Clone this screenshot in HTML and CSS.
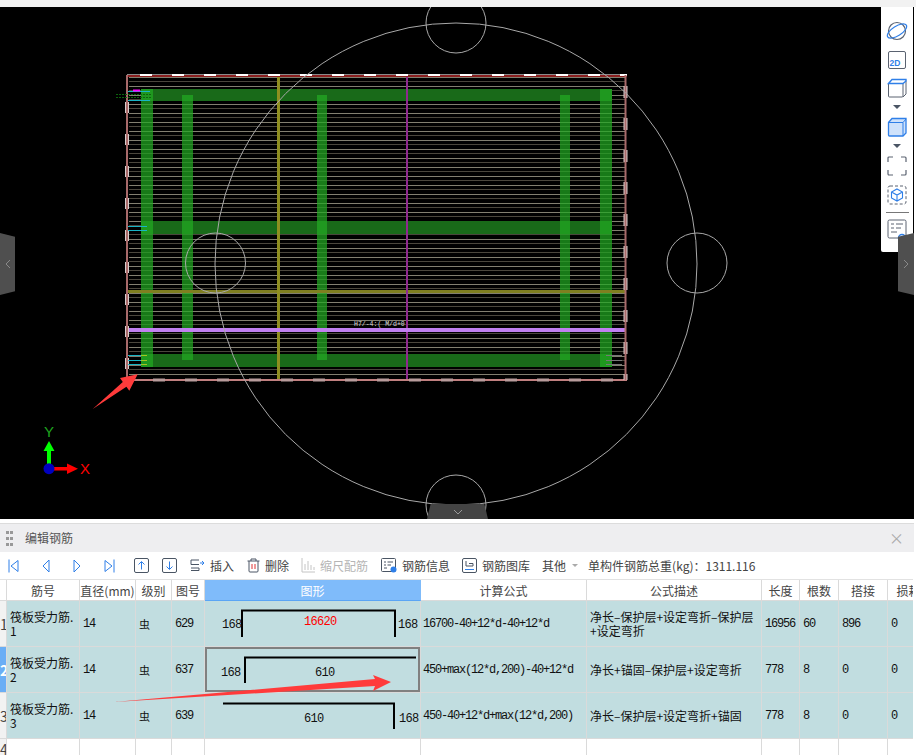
FILE: index.html
```html
<!DOCTYPE html>
<html lang="zh-CN">
<head>
  <meta charset="UTF-8">
  <title>编辑钢筋</title>
  <link rel="stylesheet" href="styles.css">
</head>
<body>

  <div class="top-strip"></div>

  <!-- 三维视图 -->
  <div class="viewport">
    <svg class="cad" width="914" height="512" viewBox="0 7 914 512">
      <defs>
        <pattern id="rebarLines" width="10" height="9" y="5" patternUnits="userSpaceOnUse">
          <rect width="10" height="1" fill="#827f70"/>
          <rect y="4" width="10" height="1" fill="#4a463c"/>
        </pattern>
      </defs>

      <rect x="129" y="77" width="496" height="301" fill="url(#rebarLines)"/>

      <!-- 横向绿筋 -->
      <g fill="#196a19">
        <rect x="141" y="89" width="471" height="12"/>
        <rect x="141" y="221" width="471" height="13"/>
        <rect x="141" y="354" width="471" height="13"/>
      </g>
      <!-- 纵向绿筋 -->
      <g fill="#22aa22" opacity="0.72">
        <rect x="141" y="89" width="12" height="278"/>
        <rect x="182" y="95" width="11" height="265"/>
        <rect x="317" y="95" width="10" height="265"/>
        <rect x="560" y="95" width="10" height="265"/>
        <rect x="600" y="89" width="12" height="278"/>
      </g>

      <rect x="127" y="290" width="499" height="3" fill="#7f7f20"/>
      <rect x="277" y="75" width="3" height="305" fill="#8f8f20"/>
      <rect x="406" y="75" width="2" height="305" fill="#8f2a8f"/>
      <rect x="127" y="328" width="499" height="4" fill="#c080f0"/>

      <!-- 外框 -->
      <g fill="none" stroke-width="2">
        <path d="M127 74.500H627" stroke="#8a8a8a" stroke-width="1"/>
        <path d="M127 76H627" stroke="#8b1f1f"/>
        <path d="M127 380H627" stroke="#c08080"/>
        <path d="M140 75H627" stroke="#fff" stroke-dasharray="12 20"/>
        <path d="M153 380H627" stroke="#b89c9c" stroke-width="3" stroke-dasharray="12 20"/>
        <path d="M127 102V380" stroke="#d8cccc" stroke-width="4" stroke-dasharray="11 21"/>
        <path d="M625.500 86V380" stroke="#d8cccc" stroke-width="4" stroke-dasharray="12 20"/>
        <path d="M127 75V380" stroke="#a86a6a"/>
        <path d="M625.500 75V380" stroke="#a86a6a"/>
      </g>

      <!-- 端部标注 -->
      <g stroke-width="1" fill="none">
        <path d="M128 91.500H150M128 100.500H150" stroke="#17b5c5"/>
        <path d="M133 90.500H140" stroke="#ff00ff" stroke-width="2"/>
        <path d="M116 94.500H151M116 97.500H151" stroke="#0c640c" stroke-dasharray="2 1"/>
        <path d="M128 226.500H147M128 230.500H147" stroke="#17b5c5"/>
        <path d="M128 355.500H147M128 360.500H147M128 364.500H147" stroke="#17b5c5"/>
        <path d="M141 355.500H147M141 360.500H147M141 364.500H147" stroke="#a5c520"/>
        <path d="M606 355.500H622M606 360.500H622M606 364.500H622" stroke="#777"/>
      </g>
      <text class="cad-note" x="354" y="326">H7/-4:( M/d+0</text>

      <!-- 圆 -->
      <g fill="none" stroke="#a8a8a8">
        <circle cx="456" cy="264" r="241"/>
        <circle cx="456" cy="23" r="30"/>
        <circle cx="456" cy="505" r="30"/>
        <circle cx="697" cy="263" r="30"/>
        <circle cx="215.500" cy="263" r="30"/>
      </g>

      <!-- 坐标轴 -->
      <path d="M49 441L54.500 451H51V464H47V451H43.500Z" fill="#00ff00"/>
      <path d="M53 467H67V463.500L78 468.700L67 474V470.500H53Z" fill="#ff0000"/>
      <circle cx="49" cy="468.700" r="5.500" fill="#0000c0"/>
      <text class="axis axis-y" x="49" y="437">Y</text>
      <text class="axis axis-x" x="85" y="474">X</text>
    </svg>

    <div class="tool-rail">
      <svg width="20" height="20" viewBox="0 0 20 20" fill="none">
        <circle cx="10" cy="10" r="8.500" stroke="#5a6270" stroke-width="1.200"/>
        <ellipse cx="10" cy="10" rx="11" ry="4.800" transform="rotate(-32 10 10)" stroke="#2f7fe8" stroke-width="1.200"/>
      </svg>
      <svg width="20" height="20" viewBox="0 0 20 20" fill="none">
        <rect x="1.500" y="1.500" width="17" height="17" rx="1.500" stroke="#5a6270"/>
        <text class="icon-2d" x="2.500" y="16">2D</text>
      </svg>
      <svg class="first-cube" width="20" height="20" viewBox="0 0 20 20" fill="none">
        <path d="M1.500 5.500V18a1 1 0 0 0 1 1H15a1 1 0 0 0 1-1V5.500H2.500a1 1 0 0 0-1 0Z" stroke="#5a6270"/>
        <path d="M16 19L19 16V2.500" stroke="#5a6270"/>
        <path d="M1.500 5.500L5 1.500H19V3L16 5.500H1.500Z" stroke="#2f7fe8" stroke-width="1.400"/>
      </svg>
      <i class="caret"></i>
      <svg width="20" height="20" viewBox="0 0 20 20" fill="none">
        <path d="M1.500 5.500L5 1.500H19V16L16 19H2.500a1 1 0 0 1-1-1Z" fill="#cfe2fb" stroke="#2f7fe8" stroke-width="1.300"/>
        <path d="M1.500 5.500H16V19M16 5.500L19 2" stroke="#2f7fe8"/>
      </svg>
      <i class="caret"></i>
      <svg width="20" height="20" viewBox="0 0 20 20" fill="none" stroke="#5a6270" stroke-width="1.200">
        <path d="M1 6V2a1 1 0 0 1 1-1H6M14 1H18a1 1 0 0 1 1 1V6M19 14V18a1 1 0 0 1-1 1H14M6 19H2a1 1 0 0 1-1-1V14"/>
      </svg>
      <svg width="20" height="20" viewBox="0 0 20 20" fill="none">
        <rect x="1" y="1" width="18" height="18" rx="2" stroke="#5a6270" stroke-dasharray="3 2"/>
        <path d="M10 4L15.500 7V13L10 16L4.500 13V7ZM4.500 7L10 10L15.500 7M10 10V16" stroke="#2f7fe8" stroke-width="1.100"/>
      </svg>
      <hr class="rail-sep">
      <svg width="20" height="20" viewBox="0 0 20 20" fill="none">
        <rect x="1" y="1" width="18" height="18" rx="1.500" stroke="#5a6270"/>
        <path d="M4 5H7M9 5H16M4 9H7M9 9H14M4 13H10" stroke="#5a6270"/>
        <circle cx="15" cy="19" r="3.500" stroke="#2f7fe8" stroke-width="1.500"/>
      </svg>
    </div>

    <div class="handle handle-left"><svg width="6" height="10" viewBox="0 0 6 10" fill="none"><path d="M5 1L1 5L5 9" stroke="#8a8a8a"/></svg></div>
    <div class="handle handle-right"><svg width="6" height="10" viewBox="0 0 6 10" fill="none"><path d="M1 1L5 5L1 9" stroke="#8a8a8a"/></svg></div>
    <div class="handle-bottom"><svg width="10" height="6" viewBox="0 0 10 6" fill="none"><path d="M1 1L5 5L9 1" stroke="#9a9a9a"/></svg></div>
  </div>

  <!-- 编辑钢筋 -->
  <div class="panel">
    <div class="panel-title">
      <span class="grip"><i></i><i></i><i></i><i></i><i></i><i></i></span>
      <span class="panel-name">编辑钢筋</span>
      <span class="panel-close">×</span>
    </div>

    <div class="toolbar">
      <svg class="nav nav-first" width="11" height="14" viewBox="0 0 11 14" fill="none" stroke="#2f7fe8"><path d="M1 .5V13.500M10 1.500V12.500L3 7Z"/></svg>
      <svg class="nav nav-prev" width="8" height="14" viewBox="0 0 8 14" fill="none" stroke="#2f7fe8"><path d="M7 1V13L1 7Z"/></svg>
      <svg class="nav nav-next" width="8" height="14" viewBox="0 0 8 14" fill="none" stroke="#2f7fe8"><path d="M1 1V13L7 7Z"/></svg>
      <svg class="nav nav-last" width="11" height="14" viewBox="0 0 11 14" fill="none" stroke="#2f7fe8"><path d="M10 .5V13.500M1 1.500V12.500L8 7Z"/></svg>
      <svg class="btn-up" width="15" height="15" viewBox="0 0 15 15" fill="none"><rect x=".5" y=".5" width="14" height="14" rx="1.500" stroke="#4a5564"/><path d="M7.500 11.500V4M4.500 6.500L7.500 3.500L10.500 6.500" stroke="#2f7fe8"/></svg>
      <svg class="btn-down" width="15" height="15" viewBox="0 0 15 15" fill="none"><rect x=".5" y=".5" width="14" height="14" rx="1.500" stroke="#4a5564"/><path d="M7.500 3.500V11M4.500 8.500L7.500 11.500L10.500 8.500" stroke="#2f7fe8"/></svg>

      <svg class="tb-icon i-insert" width="15" height="13" viewBox="0 0 15 13" fill="none"><path d="M9 1H1V5.500H9M1 9H9V11.500H1" stroke="#4a5564"/><path d="M10 4H14M12 2L14 4L12 6" stroke="#2f7fe8"/></svg>
      <span class="tb-text">插入</span>
      <svg class="tb-icon i-del" width="13" height="15" viewBox="0 0 13 15" fill="none"><path d="M.5 3H12.500M4 3V1H9V3M2 3V13a1 1 0 0 0 1 1H10a1 1 0 0 0 1-1V3" stroke="#4a5564"/><path d="M5 6V11M8 6V11" stroke="#e03030"/></svg>
      <span class="tb-text">删除</span>
      <svg class="tb-icon i-scale" width="14" height="15" viewBox="0 0 14 15" fill="none" stroke="#c4c4c4"><path d="M1 0V14H14M4 6V12M7 3V12M10 7V12M13 9V12"/></svg>
      <span class="tb-text tb-off">缩尺配筋</span>
      <svg class="tb-icon i-info" width="16" height="15" viewBox="0 0 16 15" fill="none"><rect x=".5" y=".5" width="14" height="13" rx="1" stroke="#4a5564"/><path d="M3 4H5M6.500 4H12M3 7H5M6.500 7H10M3 10H6" stroke="#4a5564"/><circle cx="12.500" cy="11.500" r="3" fill="#2f7fe8"/></svg>
      <span class="tb-text">钢筋信息</span>
      <svg class="tb-icon i-lib" width="15" height="15" viewBox="0 0 15 15" fill="none"><rect x=".5" y=".5" width="14" height="14" rx="1.500" stroke="#4a5564"/><path d="M4 3V8H11V5.500H7" stroke="#4a5564"/><path d="M3 11.500H12" stroke="#2f7fe8"/></svg>
      <span class="tb-text">钢筋图库</span>
      <span class="tb-text tb-other">其他</span>
      <i class="tb-caret"></i>
      <span class="tb-text tb-total">单构件钢筋总重(kg)：1311.116</span>
    </div>

    <div class="grid-wrap">
      <table class="grid">
        <colgroup>
          <col class="c-idx"><col class="c-no"><col class="c-dia"><col class="c-grade"><col class="c-fig">
          <col class="c-shape"><col class="c-calc"><col class="c-desc"><col class="c-len">
          <col class="c-count"><col class="c-lap"><col class="c-loss">
        </colgroup>
        <tr class="head">
          <th></th>
          <th>筋号</th>
          <th>直径(mm)</th>
          <th>级别</th>
          <th>图号</th>
          <th class="th-on">图形</th>
          <th>计算公式</th>
          <th>公式描述</th>
          <th>长度</th>
          <th>根数</th>
          <th>搭接</th>
          <th>损耗</th>
        </tr>
        <tr class="row">
          <td class="idx">1</td>
          <td>筏板受力筋.<br>1</td>
          <td class="num">14</td>
          <td class="grade">虫</td>
          <td class="num">629</td>
          <td class="shape">
            <svg width="215" height="45" viewBox="205 601 215 45">
              <path d="M242 637V610.500H395V637" fill="none" stroke="#000" stroke-width="2"/>
              <text x="222" y="628">168</text>
              <text class="len-red" x="304" y="625">16620</text>
              <text x="398" y="628">168</text>
            </svg>
          </td>
          <td class="num calc">16700-40+12*d-40+12*d</td>
          <td class="desc">净长–保护层+设定弯折–保护层<br>+设定弯折</td>
          <td class="num">16956</td>
          <td class="num">60</td>
          <td class="num">896</td>
          <td class="num">0</td>
        </tr>
        <tr class="row">
          <td class="idx idx-on">2</td>
          <td>筏板受力筋.<br>2</td>
          <td class="num">14</td>
          <td class="grade">虫</td>
          <td class="num">637</td>
          <td class="shape shape-on">
            <svg width="215" height="45" viewBox="205 647 215 45">
              <path d="M245 683V657.500H416" fill="none" stroke="#000" stroke-width="2"/>
              <text x="221" y="676">168</text>
              <text x="315" y="676">610</text>
            </svg>
          </td>
          <td class="num calc">450+max(12*d,200)-40+12*d</td>
          <td class="desc">净长+锚固–保护层+设定弯折</td>
          <td class="num">778</td>
          <td class="num">8</td>
          <td class="num">0</td>
          <td class="num">0</td>
        </tr>
        <tr class="row">
          <td class="idx">3</td>
          <td>筏板受力筋.<br>3</td>
          <td class="num">14</td>
          <td class="grade">虫</td>
          <td class="num">639</td>
          <td class="shape">
            <svg width="215" height="45" viewBox="205 693 215 45">
              <path d="M223 703.500H394V729" fill="none" stroke="#000" stroke-width="2"/>
              <text x="304" y="722">610</text>
              <text x="399" y="722">168</text>
            </svg>
          </td>
          <td class="num calc">450-40+12*d+max(12*d,200)</td>
          <td class="desc">净长–保护层+设定弯折+锚固</td>
          <td class="num">778</td>
          <td class="num">8</td>
          <td class="num">0</td>
          <td class="num">0</td>
        </tr>
        <tr class="row-empty">
          <td class="idx">4</td>
          <td></td><td></td><td></td><td></td><td></td><td></td><td></td><td></td><td></td><td></td><td></td>
        </tr>
      </table>
    </div>
  </div>

  <!-- 红色标注箭头 -->
  <svg class="marks" width="916" height="755" viewBox="0 0 916 755">
    <polygon points="92.700,409 122.800,381.900 120,378 137.700,374.300 129.300,390.700 126.400,386.700" fill="#ff3b3b"/>
    <polygon points="114,702 375,679 373,675 391,682 373,691 375,686" fill="#ff3b3b"/>
  </svg>

</body>
</html>
```

FILE: styles.css
```css
* { box-sizing: border-box; }
html, body { height: 755px; overflow: hidden; }
body {
  margin: 0;
  position: relative;
  background-color: #fff;
  font-family: "Noto Sans CJK SC", "Noto Sans", sans-serif;
  font-size: 12px;
  color: #111;
}

.top-strip { height: 7px; background-color: #f2f2f2; }

.viewport {
  position: relative;
  width: 914px;
  height: 512px;
  background-color: #000;
  overflow: hidden;
}
.cad { display: block; }
.cad-note { font-family: "Liberation Mono", monospace; font-size: 6.500px; fill: #ddd; }
.axis { font-family: "Liberation Sans", sans-serif; font-size: 15px; text-anchor: middle; }
.axis-y { fill: #1fa51f; }
.axis-x { fill: #ff0000; }

/* 右侧工具条 */
.tool-rail {
  position: absolute;
  top: 0;
  left: 881px;
  width: 32px;
  height: 245px;
  padding-top: 14px;
  background-color: #fff;
  border-radius: 0 0 2px 2px;
  display: flex;
  flex-direction: column;
  align-items: center;
  gap: 9px;
}
.tool-rail svg { flex: none; overflow: visible; }
.first-cube { margin-top: -1px; }
.caret {
  flex: none;
  width: 0;
  height: 0;
  margin: -2px 0 -1px;
  border-left: 4px solid transparent;
  border-right: 4px solid transparent;
  border-top: 4px solid #4a5564;
}
.icon-2d { font-family: "Liberation Sans", sans-serif; font-size: 8.500px; font-weight: bold; fill: #2f7fe8; }
.rail-sep { width: 23px; height: 1px; margin: -2px 0 -3px; border: 0; background-color: #777; flex: none; }

/* 折叠把手 */
.handle {
  position: absolute;
  top: 226px;
  width: 16px;
  height: 62px;
  background-color: #4f4f4f;
  display: flex;
  align-items: center;
  justify-content: center;
}
.handle-left { left: 0; width: 15px; clip-path: polygon(0 0, 100% 6%, 100% 94%, 0 100%); }
.handle-right { right: 0; clip-path: polygon(0 6%, 100% 0, 100% 100%, 0 94%); border-radius: 3px 0 0 3px; }
.handle-bottom {
  position: absolute;
  left: 427px;
  bottom: 0;
  width: 61px;
  height: 15px;
  background-color: #444;
  clip-path: polygon(6% 0, 94% 0, 100% 100%, 0 100%);
  display: flex;
  align-items: center;
  justify-content: center;
}

/* 面板 */
.panel {
  width: 914px;
  margin-top: 4px;
  border-top: 1px solid #dcdcdc;
}
.panel-title {
  height: 28px;
  background-color: #eeeef0;
  display: flex;
  align-items: center;
  padding: 0 0 2px 6px;
  color: #555;
}
.grip { display: grid; grid-template-columns: 3px 3px; gap: 3px 1px; width: 7px; margin-top: 2px; }
.grip i { display: block; width: 3px; height: 3px; background-color: #999; }
.panel-name { margin-left: 12px; }
.panel-close { margin-left: auto; margin-right: 10px; font-size: 15px; color: #aaa; }

.toolbar {
  height: 27px;
  display: flex;
  align-items: center;
  padding-left: 8px;
  color: #444;
}
.toolbar svg { flex: none; }
.nav-prev { margin-left: 23px; }
.nav-next { margin-left: 23px; }
.nav-last { margin-left: 23px; }
.btn-up { margin-left: 19px; }
.btn-down { margin-left: 13px; }
.i-insert { margin-left: 13px; }
.i-del { margin-left: 13px; }
.i-scale { margin-left: 12px; }
.i-info { margin-left: 13px; }
.i-lib { margin-left: 12px; }
.tb-text { margin-left: 5px; white-space: nowrap; }
.tb-off { color: #b5b5b5; }
.tb-other { margin-left: 12px; }
.tb-caret {
  width: 0;
  height: 0;
  margin-left: 6px;
  border-left: 3px solid transparent;
  border-right: 3px solid transparent;
  border-top: 3px solid #aaa;
}
.tb-total { margin-left: 10px; }

/* 表格 */
.grid-wrap { overflow: hidden; width: 913px; border-top: 1px solid #e2e2e2; }
.grid {
  table-layout: fixed;
  width: 930px;
  border-collapse: separate;
  border-spacing: 0;
}
.c-idx { width: 7px; }
.c-no { width: 73px; }
.c-dia { width: 56px; }
.c-grade { width: 36px; }
.c-fig { width: 33px; }
.c-shape { width: 216px; }
.c-calc { width: 166px; }
.c-desc { width: 175px; }
.c-len { width: 38px; }
.c-count { width: 39px; }
.c-lap { width: 49px; }
.c-loss { width: 42px; }

th, td {
  padding: 0;
  border-right: 1px solid #dadada;
  border-bottom: 1px solid #dadada;
  overflow: hidden;
}
th {
  height: 21px;
  font-weight: normal;
  color: #444;
  text-align: center;
  white-space: nowrap;
  background-color: #fff;
}
.th-on {
  background-color: #7fbbfa;
  color: #fff;
  border-bottom: 1px solid #5aa5f5;
  border-right-color: #7fbbfa;
}
.row td {
  height: 46px;
  background-color: #c1dde0;
  padding-left: 3px;
  line-height: 14px;
}
.row-empty td { height: 20px; }
.row td.idx, .row-empty td.idx {
  padding: 0;
  background-color: #f2f2f2;
  font-size: 14px;
  line-height: 14px;
  color: #444;
  white-space: nowrap;
}
.row td.idx-on {
  background-color: #6aaef5;
  color: #fff;
  font-weight: bold;
}
.num {
  font-family: "Liberation Mono", monospace;
  font-size: 12px;
  letter-spacing: -1.2px;
  white-space: nowrap;
}
.row td.calc { padding-left: 2px; }
.row td.desc { padding-left: 3px; white-space: nowrap; }
.grade { font-size: 11px; }
.row td.shape { padding: 0; }
.shape svg { display: block; }
.shape text {
  font-family: "Liberation Mono", monospace;
  font-size: 12px;
  letter-spacing: -0.7px;
  fill: #111;
}
.shape text.len-red { fill: #ff0000; }
.shape-on { box-shadow: inset 0 0 0 2px #808080; }

.marks { position: absolute; left: 0; top: 0; pointer-events: none; }
```
